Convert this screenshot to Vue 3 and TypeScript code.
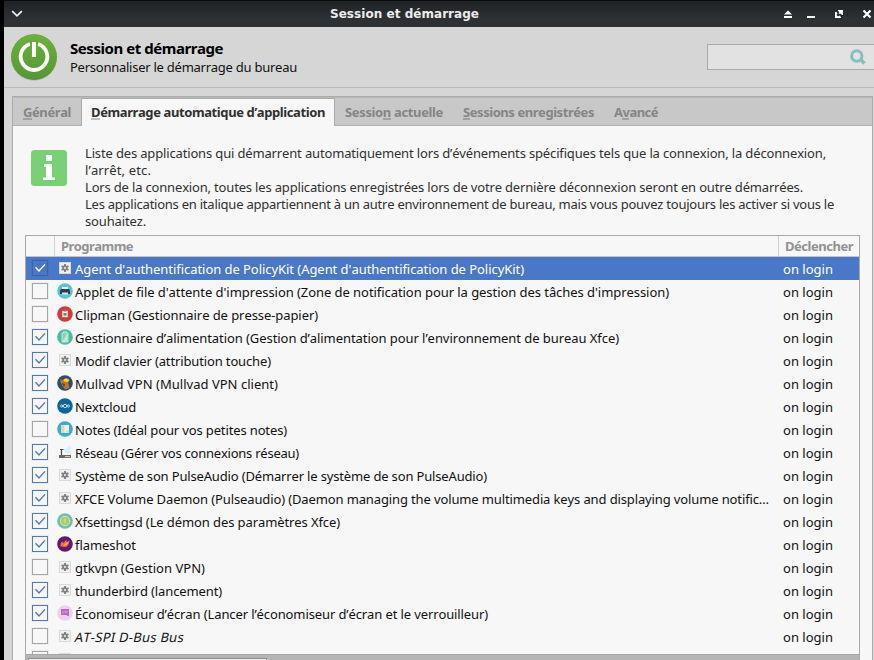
<script setup lang="ts">
import type { Directive } from 'vue'

interface Entry {
  name: string
  icon: string
  on: boolean
  width: number
  italic?: boolean
}

// Spreads the letters of a one-line label evenly over the given width in pixels.
const vFit: Directive<HTMLElement, number> = {
  mounted(el, binding) {
    const count = (el.textContent ?? '').length
    if (!count || !binding.value) return
    el.style.letterSpacing = '0.01px'
    const natural = el.getBoundingClientRect().width - count * 0.01
    el.style.letterSpacing = `${((binding.value - 1 - natural) / count).toFixed(4)}px`
  },
}

const entries: Entry[] = [
  { name: "Agent d'authentification de PolicyKit (Agent d'authentification de PolicyKit)", icon: 'gear', on: true, width: 450 },
  { name: "Applet de file d'attente d'impression (Zone de notification pour la gestion des tâches d'impression)", icon: 'printer', on: false, width: 595 },
  { name: 'Clipman (Gestionnaire de presse-papier)', icon: 'clip', on: false, width: 244 },
  { name: 'Gestionnaire d’alimentation (Gestion d’alimentation pour l’environnement de bureau Xfce)', icon: 'power', on: true, width: 545 },
  { name: 'Modif clavier (attribution touche)', icon: 'gear', on: true, width: 197 },
  { name: 'Mullvad VPN (Mullvad VPN client)', icon: 'mullvad', on: true, width: 204 },
  { name: 'Nextcloud', icon: 'nextcloud', on: true, width: 62 },
  { name: 'Notes (Idéal pour vos petites notes)', icon: 'notes', on: false, width: 213 },
  { name: 'Réseau (Gérer vos connexions réseau)', icon: 'network', on: true, width: 225 },
  { name: 'Système de son PulseAudio (Démarrer le système de son PulseAudio)', icon: 'gear', on: true, width: 413 },
  { name: 'XFCE Volume Daemon (Pulseaudio) (Daemon managing the volume multimedia keys and displaying volume notific…', icon: 'gear', on: true, width: 695 },
  { name: 'Xfsettingsd (Le démon des paramètres Xfce)', icon: 'settings', on: true, width: 266 },
  { name: 'flameshot', icon: 'flame', on: true, width: 62 },
  { name: 'gtkvpn (Gestion VPN)', icon: 'gear', on: false, width: 131 },
  { name: 'thunderbird (lancement)', icon: 'gear', on: true, width: 148 },
  { name: 'Économiseur d’écran (Lancer l’économiseur d’écran et le verrouilleur)', icon: 'saver', on: true, width: 414 },
  { name: 'AT-SPI D-Bus Bus', icon: 'gear', on: false, width: 115, italic: true },
  { name: '', icon: 'gear', on: false, width: 0 },
]

const lines: [string, number][] = [
  ['Liste des applications qui démarrent automatiquement lors d’événements spécifiques tels que la connexion, la déconnexion,', 742],
  ['l’arrêt, etc.', 67],
  ['Lors de la connexion, toutes les applications enregistrées lors de votre dernière déconnexion seront en outre démarrées.', 719],
  ['Les applications en italique appartiennent à un autre environnement de bureau, mais vous pouvez toujours les activer si vous le', 750],
  ['souhaitez.', 62],
]
</script>

<template>
  <div class="screen">
    <div class="window">
      <div class="titlebar">
        <svg class="chev" viewBox="0 0 12 8"><path d="M1.2 1.2 L6 5.800 L10.800 1.200" fill="none" stroke="#f2f2f2" stroke-width="1.700" /></svg>
        <div class="wtitle"><span v-fit="150">Session et démarrage</span></div>
        <svg class="wbtns" viewBox="0 0 92 12">
          <path d="M6 1.500 L10 5.500 H2 Z M2 7 H10 V9 H2 Z" fill="#fff" />
          <path d="M25 7 H33 V9 H25 Z" fill="#fff" />
          <path d="M56 1 H61 V6 H60 L58.500 4.500 L57.500 5 L56.500 4 L57.500 3 L56 2 Z M53 3 H54.500 L55.500 4.500 L54.500 6 L56 7.500 L57.500 6.500 L59 8 V9 H53 Z" fill="#fff" />
          <path d="M81.500 1.500 L88.500 8.500 M88.500 1.500 L81.500 8.500" stroke="#fff" stroke-width="2.100" />
        </svg>
      </div>
      <div class="header">
        <svg class="logo" viewBox="0 0 48 48">
          <defs><linearGradient id="pg" x1="0" y1="0" x2="0" y2="1"><stop offset="0" stop-color="#6cb03c" /><stop offset="1" stop-color="#549833" /></linearGradient></defs>
          <circle cx="24" cy="24.800" r="23" fill="#bcbcbc" />
          <circle cx="24" cy="24" r="23" fill="url(#pg)" />
          <path d="M20 11 A13.300 13.300 0 1 0 28 11" fill="none" stroke="#fff" stroke-width="3.800" />
          <path d="M20.600 8 H27.400 V24 H20.600 Z" fill="#65a93a" />
          <path d="M22 9 H26 V24 H22 Z" fill="#fff" />
        </svg>
        <div class="heads">
          <div class="h1"><span v-fit="154">Session et démarrage</span></div>
          <div class="h2"><span v-fit="228">Personnaliser le démarrage du bureau</span></div>
        </div>
        <div class="search">
          <svg viewBox="0 0 16 16"><circle cx="6.800" cy="7" r="5.200" fill="none" stroke="#80c1bd" stroke-width="3" /><path d="M10.500 10.500 L14.500 14.500" stroke="#80c1bd" stroke-width="3.300" /></svg>
        </div>
      </div>
      <div class="body">
        <div class="notebook">
          <div class="tabs">
            <div class="tab t1"><span v-fit="49"><u>G</u>énéral</span></div>
            <div class="tab active"><span v-fit="235"><u>D</u>émarrage automatique d’application</span></div>
            <div class="tab t3"><span v-fit="99">Sessio<u>n</u> actuelle</span></div>
            <div class="tab t4"><span v-fit="132"><u>S</u>essions enregistrées</span></div>
            <div class="tab t5"><span v-fit="45">A<u>v</u>ancé</span></div>
          </div>
          <div class="page">
            <div class="info">
              <svg class="infoicon" viewBox="0 0 36 36"><rect width="36" height="36" rx="3.500" fill="#7ad074" /><path d="M15 5 H21 V11 H15 Z M13 14 H21 V27.500 H24 V30 H12 V27.500 H15 V17 H13 Z" fill="#fff" /></svg>
              <div class="infotext">
                <div v-for="l in lines" :key="l[0]"><span v-fit="l[1]">{{ l[0] }}</span></div>
              </div>
            </div>
            <div class="table">
              <div class="thead">
                <div class="c0"></div>
                <div class="c1"><span v-fit="73">Programme</span></div>
                <div class="c2"><span v-fit="69">Déclencher</span></div>
              </div>
              <div class="rows">
                <div v-for="(e, i) in entries" :key="i" class="row" :class="{ sel: i === 0, italic: e.italic }">
                  <svg class="check" viewBox="0 0 18 18">
                    <rect x="0.500" y="0.500" width="17" height="17" fill="none" :stroke="i === 0 ? '#4474c0' : '#ececec'" />
                    <rect x="1.500" y="1.500" width="15" height="15" :fill="i === 0 ? 'none' : '#f7f7f7'" :stroke="i === 0 ? '#2d508c' : e.on ? '#4a7ac8' : '#a4a4a4'" :stroke-dasharray="i === 0 ? '1 1' : undefined" />
                    <path v-if="e.on" d="M4.500 8.300 L8 12 L14 5.400" fill="none" :stroke="i === 0 ? '#fff' : '#4a7ac8'" stroke-width="1.400" />
                  </svg>
                  <svg class="ico" viewBox="0 0 16 16">
                    <g v-if="e.icon === 'gear'">
                      <rect x="2.500" y="2.500" width="11" height="11" fill="#f1f1f1" stroke="#d9d9d9" />
                      <path d="M8 4 V12 M4.500 6 L11.500 10 M11.500 6 L4.500 10" stroke="#858585" stroke-width="2" />
                      <circle cx="8" cy="8" r="1.900" fill="#eee" stroke="#808080" stroke-width="1.700" />
                    </g>
                    <g v-else-if="e.icon === 'printer'">
                      <circle cx="8" cy="8" r="7.800" fill="#58c5d0" />
                      <path d="M5 4 H11 V7 H5 Z" fill="#e9f2f3" /><path d="M4 6 H12 L13 7.500 V11 H3 V7.500 Z" fill="#2b4150" /><path d="M5 9.500 H11 V11.500 H5 Z" fill="#dceaf0" />
                    </g>
                    <g v-else-if="e.icon === 'clip'">
                      <circle cx="8" cy="8" r="7.800" fill="#d03b3b" />
                      <path d="M5 4.500 H11 V11.500 H5 Z" fill="#f7efe2" stroke="#a95343" stroke-width=".6" /><path d="M6.500 3.800 H9.500 V5.500 H6.500 Z M6.500 7 H9.500 V9.500 H6.500 Z" fill="#986b61" />
                    </g>
                    <g v-else-if="e.icon === 'power'">
                      <circle cx="8" cy="8" r="7.800" fill="#4fbaa4" />
                      <path d="M5 4 H6.500 V2.800 H9.500 V4 H11 V13 H5 Z" fill="#83d2b4" stroke="#d6eee7" stroke-width=".8" /><path d="M10.500 4.500 V12.500 H5.500 Z" fill="#dff1eb" opacity=".75" />
                    </g>
                    <g v-else-if="e.icon === 'mullvad'">
                      <circle cx="8" cy="8" r="7.800" fill="#294d73" />
                      <path d="M3 4 L7 6 L12 4.500 L11 7 L12.500 13 L8.500 14.500 L6 12 L3.500 7 Z" fill="#b9772f" /><path d="M6 5 Q9 1.500 12.500 5 L11 7 L7 6.500 Z" fill="#fccb2f" /><path d="M5 8 L8 9 L7 12 Z" fill="#50402f" />
                    </g>
                    <g v-else-if="e.icon === 'nextcloud'">
                      <circle cx="8" cy="8" r="7.800" fill="#0d659f" />
                      <g fill="none" stroke="#d7e8f2" stroke-width=".9"><circle cx="8" cy="8" r="1.700" /><circle cx="4.700" cy="8" r="1.100" /><circle cx="11.300" cy="8" r="1.100" /></g>
                    </g>
                    <g v-else-if="e.icon === 'notes'">
                      <circle cx="8" cy="8" r="7.800" fill="#38add0" />
                      <path d="M4 4 H12 V12 H4 Z" fill="#f4f0e6" /><path d="M4 4 H7.500 V12 H4 Z" fill="#e3d4b8" /><path d="M9 9.500 H12 V12 H9 Z" fill="#d6dfdf" />
                    </g>
                    <g v-else-if="e.icon === 'network'">
                      <path d="M6 6 L14 1.500 V11 L8 8.500 Z" fill="#dcf0fa" />
                      <path d="M4.500 5.500 V12 M3 5.500 H6.500" stroke="#444" fill="none" stroke-width="1.200" /><path d="M2 11 H14 V14 H2 Z" fill="#66696b" /><path d="M8 12 H13 V13.200 H8 Z" fill="#d5cb7c" />
                    </g>
                    <g v-else-if="e.icon === 'settings'">
                      <circle cx="8" cy="8" r="7.800" fill="#70bdbb" /><circle cx="8" cy="8" r="4.700" fill="#a6cf62" stroke="#d9e6b5" /><path d="M8 5.500 V10.500" stroke="#d8e9b5" />
                    </g>
                    <g v-else-if="e.icon === 'flame'">
                      <circle cx="8" cy="8" r="7.800" fill="#5f1a72" /><path d="M3.500 10.500 Q3 6.500 5.500 5.500 L6.500 7 L9.500 3.500 L9.500 6 L12.500 4.500 Q12 10 8.500 11 Z" fill="#f26a48" /><path d="M6 10 L9.500 6.500 L11.500 6.500 Q10 9.500 6 10 Z" fill="#fbb335" />
                    </g>
                    <g v-else>
                      <circle cx="8" cy="8" r="7.800" fill="#e9d3ea" /><path d="M4 4 H12 V11 H10.500 L9.500 10 H4 Z" fill="#b866c4" /><path d="M5 8.500 L7.500 6 L9 8 L10.500 6" stroke="#e9a8df" fill="none" />
                    </g>
                  </svg>
                  <div class="name"><span v-fit="e.width">{{ e.name }}</span></div>
                  <div v-if="e.name" class="trig"><span v-fit="51">on login</span></div>
                </div>
              </div>
              <div class="hscroll"><div class="thumb"></div></div>
            </div>
          </div>
        </div>
      </div>
    </div>
  </div>
</template>

<style>
body { background: #000; overflow: hidden; }
</style>

<style scoped>
* { box-sizing: border-box; }
.screen { width: 874px; height: 660px; overflow: hidden; background: #000; padding-left: 4px; font: 13px/17px "Noto Sans", sans-serif; color: #111; font-kerning: none; }
.window { width: 870px; height: 660px; display: flex; flex-direction: column; background: #d6d6d6; }
.titlebar { height: 27px; flex: none; display: flex; align-items: center; border-top: 1px solid #08090a; background: linear-gradient(#202325, #2d3134 70%); }
.chev { width: 12px; height: 8px; margin-left: 7px; }
.wtitle { flex: 1; text-align: center; font: bold 12px/26px "DejaVu Sans", sans-serif; color: #ececec; padding-left: 4px; white-space: nowrap; }
.wbtns { width: 92px; height: 12px; flex: none; margin-top: 2px; }
.header { height: 61px; flex: none; display: flex; border-bottom: 1px solid #b9b9b9; padding-left: 6px; }
.logo { width: 48px; height: 48px; margin-top: 6px; }
.heads { margin: 11px 0 0 12px; flex: 1; white-space: nowrap; }
.h1 { font-weight: bold; font-size: 15px; line-height: 20px; color: #000; }
.h2 { line-height: 17px; margin-top: 1px; }
.search { width: 172px; height: 26px; margin-top: 17px; margin-right: -5px; border: 1px solid #a9a9a9; background: #e2e2e2; padding: 4px 0 0 142px; }
.search svg { width: 16px; height: 16px; display: block; }
.body { flex: 1; padding: 8px 1px 0 8px; min-height: 0; display: flex; }
.notebook { width: 861px; border: 1px solid #ababab; border-bottom: 0; display: flex; flex-direction: column; min-height: 0; }
.tabs { height: 29px; flex: none; display: flex; background: #c8c8c8; border-top: 1px solid #b8b8b8; box-shadow: inset 0 -1px #b0b0b0; white-space: nowrap; }
.tab { font-weight: bold; line-height: 28px; color: #858585; }
.tab u { text-decoration: none; box-shadow: inset 0 -2px rgba(100, 100, 100, .4); line-height: 16px; display: inline-block; height: 16px; }
.t1 { width: 68px; padding-left: 10px; }
.active { width: 254px; padding-left: 9px; background: #f7f7f7; color: #303030; border: 1px solid #ababab; border-width: 1px 1px 0 1px; line-height: 26px; }
.t3 { width: 128px; padding-left: 10px; }
.t4 { width: 151px; }
.page { flex: 1; min-height: 0; background: #f7f7f7; padding: 19px 12px 0 12px; display: flex; flex-direction: column; }
.info { display: flex; height: 90px; flex: none; padding-left: 6px; white-space: nowrap; color: #303030; }
.infoicon { width: 36px; height: 36px; margin: 5px 18px 0 0; flex: none; }
.table { width: 835px; flex: 1; min-height: 0; border: 1px solid #a9a9a9; border-bottom: 0; display: flex; flex-direction: column; }
.thead { height: 21px; flex: none; display: flex; font-weight: bold; color: #929292; line-height: 20px; border-bottom: 1px solid #c4c4c4; }
.c0 { width: 29px; border-right: 1px solid #d0d0d0; flex: none; }
.c1 { width: 724px; border-right: 1px solid #d0d0d0; padding-left: 6px; flex: none; }
.c2 { padding-left: 6px; flex: none; }
.rows { height: 397px; flex: none; overflow: hidden; }
.row { height: 23px; display: flex; align-items: flex-start; white-space: nowrap; color: #111; }
.row.sel { background: #4a78c8; color: #fff; }
.italic .name span { display: inline-block; transform: skewX(-12deg); }
.check { width: 18px; height: 18px; margin: 2px 8px 0 5px; flex: none; }
.ico { width: 16px; height: 16px; flex: none; margin-top: 3px; }
.name { width: 710px; padding-left: 2px; line-height: 23px; padding-top: 1px; flex: none; }
.trig { line-height: 23px; padding-top: 1px; }
.hscroll { flex: 1; background: #b5b5b5; border-top: 1px solid #a6a6a6; padding: 3px 0 0 2px; }
.thumb { width: 239px; height: 8px; border: 1px solid #8c8c8c; background: #eee; }
</style>
